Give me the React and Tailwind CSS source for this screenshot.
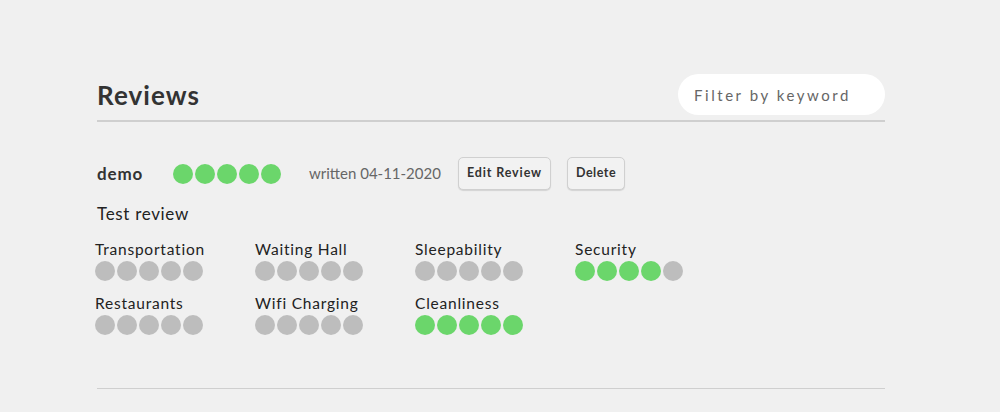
import React from 'react'

const font = { fontFamily: 'Lato, "Noto Sans", sans-serif' }

function Dots({ value }) {
  return (
    <div className="flex gap-[2px]">
      {[1, 2, 3, 4, 5].map((i) => (
        <span
          key={i}
          className={`block h-5 w-5 rounded-full ${i <= value ? 'bg-[#6bd66b]' : 'bg-[#bdbdbd]'}`}
        />
      ))}
    </div>
  )
}

const categories = [
  { name: 'Transportation', value: 0 },
  { name: 'Waiting Hall', value: 0 },
  { name: 'Sleepability', value: 0 },
  { name: 'Security', value: 4 },
  { name: 'Restaurants', value: 0 },
  { name: 'Wifi Charging', value: 0 },
  { name: 'Cleanliness', value: 5 },
]

export default function App() {
  return (
    <div className="min-h-[412px] w-full bg-[#f0f0f0]" style={font}>
      <div className="w-[788px] pt-[74px] ml-[97px]">
        {/* Header */}
        <div className="flex items-center justify-between border-b-2 border-[#cfcfcf] pb-[5px]">
          <h1 className="text-[26px] font-bold tracking-[0.04em] text-[#333] leading-none mt-[1px]">Reviews</h1>
          <input
            placeholder="Filter by keyword"
            className="h-[41px] w-[207px] rounded-full bg-white px-4 text-[15px] tracking-[0.17em] text-[#555] placeholder:text-[#666] outline-none"
          />
        </div>

        {/* Review */}
        <div className="pt-[35px] pb-[53px] border-b border-[#cfcfcf]">
          <div className="flex items-center">
            <span className="w-[76px] text-[17px] font-bold tracking-[0.05em] text-[#333]">demo</span>
            <Dots value={5} />
            <span className="ml-[28px] text-[15px] text-[#666]">written 04-11-2020</span>
            <button className="ml-[17px] h-[33px] rounded-[5px] border border-[#d0d0d0] bg-[#f2f2f2] px-[8px] text-[12.5px] font-bold tracking-[0.07em] text-[#333] shadow-[0_1px_1px_rgba(0,0,0,0.12)]">
              Edit Review
            </button>
            <button className="ml-[16px] h-[33px] rounded-[5px] border border-[#d0d0d0] bg-[#f2f2f2] px-[8px] text-[12.5px] font-bold tracking-[0.04em] text-[#333] shadow-[0_1px_1px_rgba(0,0,0,0.12)]">
              Delete
            </button>
          </div>
          <p className="mt-[11px] text-[17px] tracking-[0.04em] text-[#222]">Test review</p>
          <div className="-ml-[2px] mt-[13px] grid grid-cols-[160px_160px_160px_160px] gap-y-[13px]">
            {categories.map((c) => (
              <div key={c.name} className="flex flex-col gap-[3px]">
                <span className="text-[15.5px] tracking-[0.05em] text-[#222] leading-[18px]">{c.name}</span>
                <Dots value={c.value} />
              </div>
            ))}
          </div>
        </div>
      </div>
    </div>
  )
}
